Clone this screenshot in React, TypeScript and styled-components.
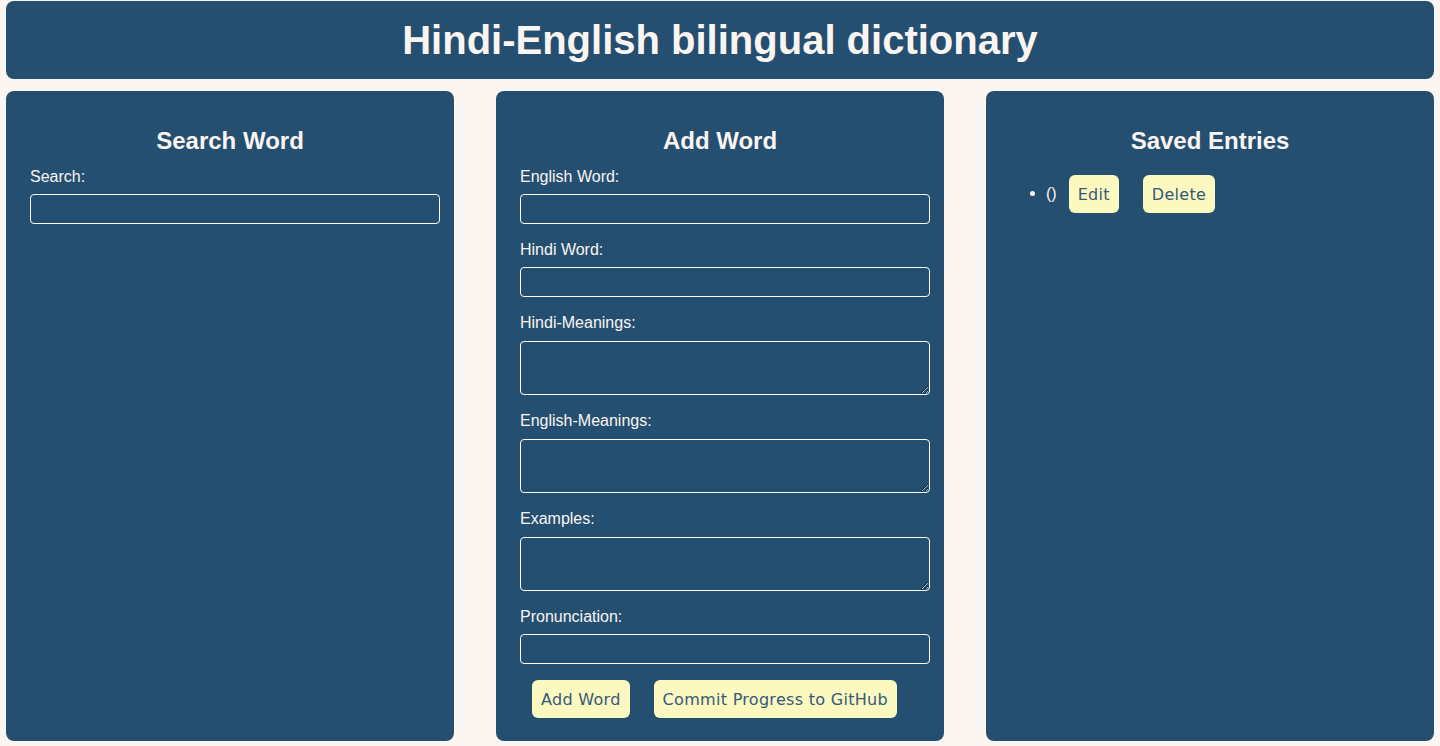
import styled, { createGlobalStyle } from "styled-components";

const GlobalStyle = createGlobalStyle`
  html, body {
    margin: 0;
    padding: 0;
    background-color: #fcf6f3;
    font-family: "Liberation Sans", Arial, sans-serif;
  }
  * {
    box-sizing: border-box;
  }
`;

const fields = [
  { label: "English Word:", multiline: false },
  { label: "Hindi Word:", multiline: false },
  { label: "Hindi-Meanings:", multiline: true },
  { label: "English-Meanings:", multiline: true },
  { label: "Examples:", multiline: true },
  { label: "Pronunciation:", multiline: false },
];

const App = () => {
  return (
    <>
      <GlobalStyle />
      <Page>
        <Header>
          <h1>Hindi-English bilingual dictionary</h1>
        </Header>
        <Columns>
          <Panel>
            <PanelTitle>Search Word</PanelTitle>
            <Form>
              <Field>
                <Label>Search:</Label>
                <TextInput type="text" />
              </Field>
            </Form>
          </Panel>

          <Panel>
            <PanelTitle>Add Word</PanelTitle>
            <Form>
              {fields.map((f) => (
                <Field key={f.label}>
                  <Label>{f.label}</Label>
                  {f.multiline ? <TextArea /> : <TextInput type="text" />}
                </Field>
              ))}
              <ButtonRow>
                <Button>Add Word</Button>
                <Button>Commit Progress to GitHub</Button>
              </ButtonRow>
            </Form>
          </Panel>

          <Panel>
            <PanelTitle>Saved Entries</PanelTitle>
            <EntryList>
              <Entry>
                <span>()</span>
                <Button>Edit</Button>
                <Button>Delete</Button>
              </Entry>
            </EntryList>
          </Panel>
        </Columns>
      </Page>
    </>
  );
};

const Page = styled.div`
  padding: 1px 6px 0;
  color: #fbf5f2;
`;

const Header = styled.header`
  height: 78px;
  background-color: #244f70;
  border-radius: 8px;
  display: flex;
  align-items: center;
  justify-content: center;

  & > h1 {
    margin: 0;
    font-size: 40px;
    font-weight: bold;
    line-height: 1;
  }
`;

const Columns = styled.main`
  margin-top: 12px;
  display: grid;
  grid-template-columns: repeat(3, 1fr);
  gap: 42px;
`;

const Panel = styled.section`
  height: 650px;
  background-color: #244f70;
  border-radius: 8px;
  padding-top: 36px;
`;

const PanelTitle = styled.h2`
  margin: 0;
  text-align: center;
  font-size: 24px;
  line-height: 28px;
  font-weight: bold;
`;

const Form = styled.div`
  margin-top: 12px;
  padding: 0 14px 0 24px;
  display: flex;
  flex-direction: column;
  gap: 16px;
`;

const Field = styled.label`
  display: flex;
  flex-direction: column;
  gap: 8px;
`;

const Label = styled.span`
  font-size: 16px;
  line-height: 18px;
  padding-top: 1px;
`;

const TextInput = styled.input`
  width: 100%;
  height: 30px;
  background: transparent;
  border: 1px solid #ffffff;
  border-radius: 4px;
  color: #fbf5f2;
  font-size: 16px;
  padding: 0 6px;
`;

const TextArea = styled.textarea`
  width: 100%;
  height: 54px;
  margin-top: 1px;
  background: transparent;
  border: 1px solid #ffffff;
  border-radius: 4px;
  color: #fbf5f2;
  font-size: 16px;
  padding: 4px 6px;
  display: block;
`;

const ButtonRow = styled.div`
  display: flex;
`;

const Button = styled.button`
  height: 38px;
  margin: 0 12px;
  padding: 0 9px;
  background-color: #fbf8c0;
  color: #35597a;
  border: none;
  border-radius: 6px;
  font-family: "DejaVu Sans", "Open Sans", sans-serif;
  font-size: 16px;
  letter-spacing: 0.3px;
  cursor: pointer;
`;

const EntryList = styled.ul`
  margin: 20px 0 0;
  padding: 0 0 0 60px;
`;

const Entry = styled.li`
  display: list-item;
  font-size: 16px;

  & > span {
    display: inline-block;
    vertical-align: middle;
  }

  & > button {
    vertical-align: middle;
  }
`;

export default App;
